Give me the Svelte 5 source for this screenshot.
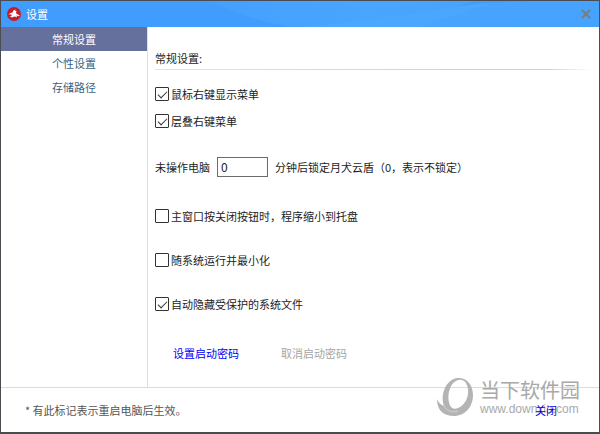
<script lang="ts">
  interface Option {
    id: string;
    label: string;
    checked: boolean;
    space: string;
  }

  const tabs = ["常规设置", "个性设置", "存储路径"];

  let active = $state(0);
  let minutes = $state("0");

  let menuOptions = $state<Option[]>([
    { id: "context-menu", label: "鼠标右键显示菜单", checked: true, space: "first" },
    { id: "cascade-menu", label: "层叠右键菜单", checked: true, space: "tight" },
  ]);

  let systemOptions = $state<Option[]>([
    { id: "tray", label: "主窗口按关闭按钮时，程序缩小到托盘", checked: false, space: "loose" },
    { id: "autorun", label: "随系统运行并最小化", checked: false, space: "normal" },
    { id: "hide-files", label: "自动隐藏受保护的系统文件", checked: true, space: "normal" },
  ]);
</script>

{#snippet optionRow(option: Option)}
  <div class="row {option.space}">
    <input type="checkbox" id={option.id} bind:checked={option.checked} />
    <label for={option.id}>{option.label}</label>
  </div>
{/snippet}

<div class="window">
  <header class="titlebar">
    <svg class="streaks" viewBox="0 0 600 26" preserveAspectRatio="none" aria-hidden="true">
      <defs>
        <linearGradient id="streak" x1="0" x2="1">
          <stop offset="0" stop-color="#4ba8fe" stop-opacity=".3" />
          <stop offset=".4" stop-color="#4ba8fe" stop-opacity=".8" />
          <stop offset="1" stop-color="#4ba8fe" stop-opacity=".5" />
        </linearGradient>
      </defs>
      <path d="M210 0 Q245 18 290 26 H600 V0Z" fill="url(#streak)" />
      <path d="M300 26 Q390 18 470 3 L500 0 Q450 16 420 26Z" fill="#50abfe" opacity=".4" />
      <path d="M455 6 Q490 1 535 0 H475Z" fill="#3796fa" opacity=".4" />
    </svg>
    <svg class="logo" viewBox="0 0 14 14" aria-hidden="true">
      <circle cx="7" cy="7" r="7" fill="#c3202c" />
      <path
        d="M1.5 7.2 4.2 5.8 5.6 5.6 6.3 3.4 8.8 2.6 8 4 9.8 4.1 8.8 5.6 9.8 7 12.6 8.3 12 9.2 9.4 8.6 10.2 10.2 7.6 9.5 5.4 10.2 2.6 9.9 4.8 8.8 4.4 7.6Z"
        fill="#fff"
      />
    </svg>
    <h1>设置</h1>
    <button class="close" aria-label="关闭窗口">
      <svg viewBox="0 0 10 10" aria-hidden="true">
        <path d="M1 1 9 9M9 1 1 9" stroke="#7d7b78" stroke-width="2" />
      </svg>
    </button>
  </header>

  <div class="body">
    <nav>
      {#each tabs as tab, i}
        <button class="tab" class:active={active === i} onclick={() => (active = i)}>{tab}</button>
      {/each}
    </nav>

    <main>
      <h2>常规设置:</h2>

      {#each menuOptions as option (option.id)}
        {@render optionRow(option)}
      {/each}

      <div class="row field">
        <label for="minutes">未操作电脑</label>
        <input type="text" id="minutes" bind:value={minutes} />
        <span>分钟后锁定月犬云盾（0，表示不锁定）</span>
      </div>

      {#each systemOptions as option (option.id)}
        {@render optionRow(option)}
      {/each}

      <div class="row links">
        <button class="link">设置启动密码</button>
        <button class="link" disabled>取消启动密码</button>
      </div>
    </main>
  </div>

  <footer>
    <p>* 有此标记表示重启电脑后生效。</p>
    <div class="watermark">
      <svg viewBox="0 0 38 40" aria-hidden="true">
        <path
          d="M21 1C31 0 37 8 37 18 37 30 29 39 18 39 8 39 1 34 1 22 3 26 5 28 8 29 4 17 10 3 21 1ZM23 3C15 4 11 16 13 25 14 31 18 33 22 31 29 28 33 20 32 12 31 6 28 2 23 3Z"
          fill="#b4b4b4"
          fill-rule="evenodd"
        />
        <path d="M8 29C11 34 16 36 22 34" fill="none" stroke="#d2d2d2" />
      </svg>
      <div>
        <div class="mark-name">当下软件园</div>
        <div class="mark-url">www.downxia.com</div>
      </div>
    </div>
    <button class="link">关闭</button>
  </footer>
</div>

<style>
  :global(body) {
    margin: 0;
  }

  .window {
    box-sizing: border-box;
    min-height: 100vh;
    display: flex;
    flex-direction: column;
    border: 1px solid #4b4b52;
    border-bottom-width: 2px;
    background: #fff;
    color: #1c1c1c;
    font: 11px/20px "Noto Sans CJK SC", sans-serif;
  }

  button,
  input {
    font: inherit;
    color: inherit;
  }

  button {
    padding: 0;
    border: 0;
    background: none;
    cursor: pointer;
  }

  h1,
  h2,
  p {
    margin: 0;
    font: inherit;
  }

  .titlebar {
    position: relative;
    display: flex;
    align-items: center;
    gap: 5px;
    height: 26px;
    padding: 0 8px 0 6px;
    background: #409cfd;
    color: #fff;
  }

  .titlebar > * {
    position: relative;
  }

  .titlebar .streaks {
    position: absolute;
    inset: 0;
    width: 100%;
    height: 100%;
  }

  .logo {
    width: 14px;
    height: 14px;
  }

  .close {
    display: flex;
    margin-left: auto;
  }

  .close svg {
    width: 10px;
    height: 10px;
  }

  .body {
    flex: 1;
    display: flex;
  }

  nav {
    width: 146px;
    flex-shrink: 0;
    border-right: 1px solid #dcdfe3;
  }

  .tab {
    display: block;
    width: 100%;
    height: 24px;
    color: #3c6284;
  }

  .tab.active {
    background: #66709d;
    color: #fff;
  }

  main {
    flex: 1;
    padding: 21px 8px 20px 7px;
  }

  h2 {
    padding-bottom: 1px;
    border-bottom: 1px solid;
    border-image: linear-gradient(to right, #dde5ea, #c5d6de 70%, #c5d6de 90%, #fff) 1;
  }

  .row {
    display: flex;
    align-items: center;
    height: 20px;
  }

  .first {
    margin-top: 14px;
  }

  .tight {
    margin-top: 7px;
  }

  .normal {
    margin-top: 24px;
  }

  .field {
    margin-top: 26px;
    gap: 7px;
  }

  .loose,
  .links {
    margin-top: 29px;
  }

  input[type="checkbox"] {
    appearance: none;
    display: grid;
    place-items: center;
    box-sizing: border-box;
    width: 14px;
    height: 14px;
    margin: 0 2px 0 0;
    border: 1px solid #333;
    border-radius: 1px;
    background: #fff;
  }

  input[type="checkbox"]:checked::before {
    content: "";
    width: 8px;
    height: 4px;
    border: solid #333;
    border-width: 0 0 1px 1px;
    transform: translateY(-1px) rotate(-45deg);
  }

  input[type="text"] {
    box-sizing: border-box;
    width: 51px;
    height: 20px;
    padding: 0 3px;
    border: 1px solid #6b6b6b;
    border-radius: 0;
    background: #fff;
    font-size: 12px;
  }

  .links {
    gap: 42px;
    padding-left: 18px;
  }

  .link {
    color: #0000f5;
  }

  .link:disabled {
    color: #a5a5a5;
    cursor: default;
  }

  footer {
    position: relative;
    display: flex;
    align-items: center;
    justify-content: space-between;
    height: 44px;
    padding: 0 42px 0 24px;
    border-top: 1px solid #dcdcdc;
    color: #555;
  }

  footer .link {
    position: relative;
  }

  .watermark {
    position: absolute;
    right: 19px;
    bottom: 15px;
    display: flex;
    align-items: center;
    gap: 6px;
    color: #a9a9a9;
  }

  .watermark svg {
    width: 38px;
    height: 40px;
  }

  .mark-name {
    font-size: 20px;
    line-height: 24px;
  }

  .mark-url {
    font: 12px/14px "Liberation Sans", sans-serif;
  }
</style>
